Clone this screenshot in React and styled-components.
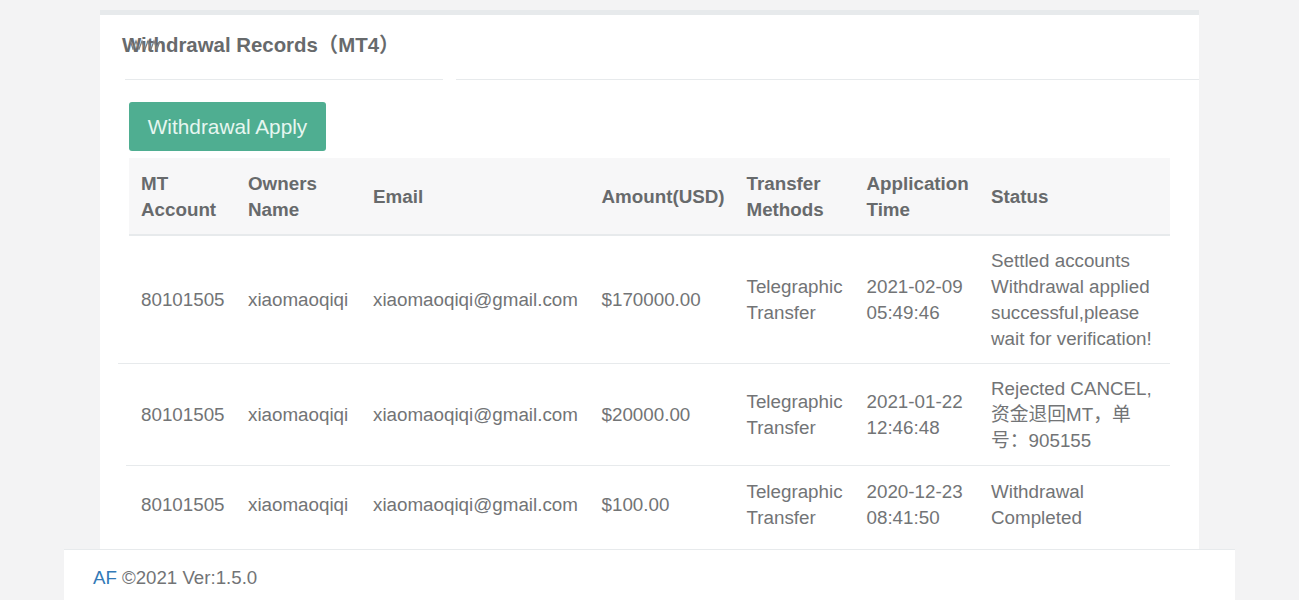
import React from 'react'
import styled, { createGlobalStyle } from 'styled-components'

const GlobalStyle = createGlobalStyle`
  html, body {
    margin: 0;
    padding: 0;
    background: #f3f3f4;
  }
  body {
    font-family: "Liberation Sans", "Noto Sans CJK SC", Arial, sans-serif;
    color: #676a6c;
  }
`

const records = [
  {
    account: '80101505',
    name: 'xiaomaoqiqi',
    email: 'xiaomaoqiqi@gmail.com',
    amount: '$170000.00',
    method: 'Telegraphic Transfer',
    time: ['2021-02-09', '05:49:46'],
    status: 'Settled accounts Withdrawal applied successful,please wait for verification!',
    lineOverhang: 11,
  },
  {
    account: '80101505',
    name: 'xiaomaoqiqi',
    email: 'xiaomaoqiqi@gmail.com',
    amount: '$20000.00',
    method: 'Telegraphic Transfer',
    time: ['2021-01-22', '12:46:48'],
    status: 'Rejected CANCEL,资金退回MT，单号：905155',
    lineOverhang: 3,
  },
  {
    account: '80101505',
    name: 'xiaomaoqiqi',
    email: 'xiaomaoqiqi@gmail.com',
    amount: '$100.00',
    method: 'Telegraphic Transfer',
    time: ['2020-12-23', '08:41:50'],
    status: 'Withdrawal Completed',
    lineOverhang: 0,
  },
]

export default function App() {
  return (
    <>
      <GlobalStyle />
      <Page>
        <Main>
          <Card>
            <CardTitle>
              <h5>
                Withdrawal Records（MT4）
                <TitleSmudge width="34" height="12" viewBox="0 0 34 12" aria-hidden="true">
                  <polyline points="0,2 3,11 6,3 9,11 12,3 15,11 18,3 21,11 24,3 27,11 30,3" />
                </TitleSmudge>
              </h5>
            </CardTitle>
            <CardBody>
              <ApplyButton>Withdrawal Apply</ApplyButton>
              <Table>
                <colgroup>
                  <col style={{ width: 107 }} />
                  <col style={{ width: 125 }} />
                  <col style={{ width: 228.5 }} />
                  <col style={{ width: 145 }} />
                  <col style={{ width: 120 }} />
                  <col style={{ width: 124.5 }} />
                  <col />
                </colgroup>
                <thead>
                  <tr>
                    <Th>MT Account</Th>
                    <Th>Owners Name</Th>
                    <Th>Email</Th>
                    <Th>Amount(USD)</Th>
                    <Th>Transfer Methods</Th>
                    <Th>Application Time</Th>
                    <Th>Status</Th>
                  </tr>
                </thead>
                <tbody>
                  {records.map((r, i) => (
                    <Row key={i}>
                      <AccountCell $overhang={r.lineOverhang}>{r.account}</AccountCell>
                      <Td>{r.name}</Td>
                      <Td>{r.email}</Td>
                      <Td>{r.amount}</Td>
                      <Td>{r.method}</Td>
                      <Td>
                        {r.time[0]}
                        <br />
                        {r.time[1]}
                      </Td>
                      <Td>{r.status}</Td>
                    </Row>
                  ))}
                </tbody>
              </Table>
            </CardBody>
          </Card>
        </Main>
        <Footer>
          <FooterLink href="#">AF</FooterLink> ©2021 Ver:1.5.0
        </Footer>
      </Page>
    </>
  )
}

const Page = styled.div`
  width: 1171px;
  height: 600px;
  margin: 0 auto;
  display: flex;
  flex-direction: column;
  overflow: hidden;
`

const Main = styled.main`
  height: 549px;
  padding: 10px 36px 0;
  box-sizing: border-box;
  overflow: hidden;
`

const Card = styled.section`
  background: #fff;
  border-top: 5px solid #e7eaec;
  height: 539px;
`

const CardTitle = styled.div`
  box-sizing: border-box;
  height: 65px;
  padding: 0 0 9px 22px;
  background: linear-gradient(
      to right,
      transparent 25px,
      #e7eaec 25px,
      #e7eaec 343px,
      transparent 343px,
      transparent 356px,
      #e7eaec 356px
    )
    bottom / 100% 1px no-repeat;
  display: flex;
  align-items: center;

  h5 {
    position: relative;
    margin: 0;
    font-size: 20.4px;
    font-weight: 700;
    color: #676a6c;
  }
`

const TitleSmudge = styled.svg`
  position: absolute;
  left: 8px;
  top: 10px;
  fill: none;
  stroke: #7b7e80;
  stroke-width: 1.3;
`

const CardBody = styled.div`
  padding: 22px 29px 0;
`

const ApplyButton = styled.button`
  display: block;
  width: 197px;
  height: 49px;
  padding: 0;
  border: 0;
  border-radius: 3px;
  background: #4fae91;
  color: #e6f6f0;
  font-family: inherit;
  font-size: 20.8px;
`

const Table = styled.table`
  width: 1041px;
  margin-top: 7px;
  table-layout: fixed;
  border-collapse: collapse;
  font-size: 18.8px;
  line-height: 26px;
`

const Th = styled.th`
  padding: 13px 12px 11px;
  background: #f7f7f8;
  border-bottom: 2px solid #e7eaec;
  color: #676a6c;
  font-weight: 700;
  text-align: left;
  vertical-align: middle;
`

const Td = styled.td`
  padding: 12px 12px 11px;
  border-bottom: 1px solid #e7eaec;
  color: #727476;
  vertical-align: middle;
`

const AccountCell = styled(Td)`
  position: relative;

  &::after {
    content: '';
    position: absolute;
    right: 100%;
    bottom: -1px;
    width: ${(p) => p.$overhang}px;
    height: 1px;
    background: #e7eaec;
  }
`

const Row = styled.tr`
  &:last-child td {
    padding-top: 13px;
    border-bottom: 0;
  }
`

const Footer = styled.footer`
  height: 51px;
  box-sizing: border-box;
  padding: 6px 29px 0;
  background: #fff;
  border-top: 1px solid #e7eaec;
  display: flex;
  align-items: center;
  gap: 5px;
  font-size: 18.7px;
  color: #727476;
`

const FooterLink = styled.a`
  color: #337ab7;
  text-decoration: none;
`
